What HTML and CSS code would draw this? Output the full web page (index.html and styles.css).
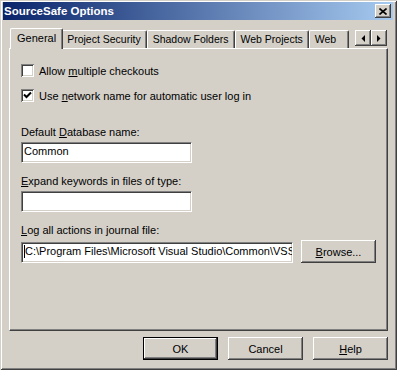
FILE: index.html
```html
<!DOCTYPE html>
<html lang="en">
<head>
    <meta charset="UTF-8">
    <title>SourceSafe Options</title>
    <link rel="stylesheet" href="styles.css">
</head>
<body>
    <div class="window">
        <div class="titlebar">
            <span class="title">SourceSafe Options</span>
            <span class="close-btn">
                <svg width="8" height="7" viewBox="0 0 8 7">
                    <path d="M0.5 0.5 L7.5 6.5 M7.5 0.5 L0.5 6.5" stroke="#000" stroke-width="1.6" fill="none"/>
                </svg>
            </span>
        </div>

        <div class="dialog">
            <div class="tab-header">
                <div class="tab-strip">
                    <div class="tab active">General</div>
                    <div class="tab">Project Security</div>
                    <div class="tab">Shadow Folders</div>
                    <div class="tab">Web Projects</div>
                    <div class="tab last">Web</div>
                </div>
                <div class="tab-arrows">
                    <span class="arrow-btn">
                        <svg width="4" height="7" viewBox="0 0 4 7"><polygon points="4,0 4,7 0.5,3.5" fill="#000"/></svg>
                    </span>
                    <span class="arrow-btn">
                        <svg width="4" height="7" viewBox="0 0 4 7"><polygon points="0,0 0,7 3.5,3.5" fill="#000"/></svg>
                    </span>
                </div>
            </div>

            <div class="tab-panel">
                <div class="check-row">
                    <span class="checkbox"></span>
                    <span class="check-label">Allow <u>m</u>ultiple checkouts</span>
                </div>
                <div class="check-row">
                    <span class="checkbox">
                        <svg width="9" height="9" viewBox="0 0 9 9"><path d="M1 3.5 L3.5 6 L8 1.5" stroke="#000" stroke-width="2" fill="none"/></svg>
                    </span>
                    <span class="check-label">Use <u>n</u>etwork name for automatic user log in</span>
                </div>

                <div class="field first">
                    <div class="field-label">Default <u>D</u>atabase name:</div>
                    <div class="textbox short">Common</div>
                </div>

                <div class="field">
                    <div class="field-label"><u>E</u>xpand keywords in files of type:</div>
                    <div class="textbox short"></div>
                </div>

                <div class="field">
                    <div class="field-label"><u>L</u>og all actions in journal file:</div>
                    <div class="field-row">
                        <div class="textbox long"><span class="caret"></span>C:\Program Files\Microsoft Visual Studio\Common\VSS\</div>
                        <button class="btn"><u>B</u>rowse...</button>
                    </div>
                </div>
            </div>

            <div class="footer">
                <button class="btn default">OK</button>
                <button class="btn">Cancel</button>
                <button class="btn"><u>H</u>elp</button>
            </div>
        </div>
    </div>
</body>
</html>
```

FILE: styles.css
```css
body {
    margin: 0;
    background: #d4d0c8;
    font-family: 'Liberation Sans', Arial, sans-serif;
    font-size: 11px;
    color: #000;
}
.window {
    width: 397px;
    height: 370px;
    box-sizing: border-box;
    padding: 2px 4px 0 3px;
    background: #d4d0c8;
    box-shadow: inset 1px 1px #d4d0c8, inset -1px -1px #404040, inset 2px 2px #fff, inset -2px -2px #808080;
}
.titlebar {
    height: 18px;
    display: flex;
    align-items: center;
    justify-content: space-between;
    padding: 0 2px 0 1px;
    background: linear-gradient(to right, #0a246a, #a6caf0);
}
.title {
    color: #fff;
    font-weight: bold;
    font-size: 11.5px;
}
.close-btn, .arrow-btn {
    display: flex;
    align-items: center;
    justify-content: center;
    box-sizing: border-box;
    background: #d4d0c8;
    box-shadow: inset -1px -1px #404040, inset 1px 1px #fff, inset -2px -2px #808080;
}
.close-btn {
    width: 16px;
    height: 14px;
}
.dialog {
    padding: 8px 0 0 6px;
}
.tab-header {
    display: flex;
    width: 379px;
    height: 21px;
    position: relative;
    z-index: 1;
}
.tab-strip {
    flex: 1;
    display: flex;
    align-items: flex-end;
    overflow: hidden;
    padding-left: 3px;
}
.tab {
    height: 18px;
    box-sizing: border-box;
    margin-bottom: 1px;
    padding: 0 5px;
    font-size: 10.5px;
    line-height: 16px;
    white-space: nowrap;
    background: #d4d0c8;
    border-top: 1px solid #fff;
    border-left: 1px solid #fff;
    border-right: 1px solid #404040;
    border-radius: 2px 2px 0 0;
    box-shadow: inset -1px 0 #808080;
}
.tab.last {
    padding-right: 12px;
}
.tab.active {
    height: 21px;
    margin: 0 -2px;
    padding: 0 6px;
    font-size: 11px;
    line-height: 18px;
    position: relative;
    z-index: 1;
}
.tab-arrows {
    display: flex;
    margin: 2px 1px 0 2px;
}
.arrow-btn {
    width: 16px;
    height: 16px;
}
.tab-panel {
    height: 283px;
    box-sizing: border-box;
    width: 379px;
    margin-top: -1px;
    padding: 15px 10px 0 11px;
    border-top: 1px solid #fff;
    border-left: 1px solid #fff;
    border-right: 1px solid #404040;
    border-bottom: 1px solid #404040;
    box-shadow: inset -1px -1px #808080;
}
.check-row {
    display: flex;
    align-items: flex-start;
    gap: 5px;
    height: 14px;
}
.check-row + .check-row {
    margin-top: 11px;
}
.checkbox {
    width: 13px;
    height: 13px;
    box-sizing: border-box;
    display: flex;
    align-items: center;
    justify-content: center;
    background: #fff;
    box-shadow: inset 1px 1px #808080, inset -1px -1px #fff, inset 2px 2px #404040, inset -2px -2px #d4d0c8;
}
.check-label {
    line-height: 13px;
    margin-top: 1px;
}
.field {
    margin-top: 12px;
}
.field.first {
    margin-top: 23px;
}
.field-label {
    line-height: 13px;
    margin-bottom: 3px;
}
.field-row {
    display: flex;
    align-items: flex-end;
    gap: 8px;
}
.textbox {
    height: 21px;
    box-sizing: border-box;
    padding: 0 2px;
    line-height: 17px;
    white-space: nowrap;
    overflow: hidden;
    background: #fff;
    border: 1px solid;
    border-color: #808080 #fff #fff #808080;
    box-shadow: inset 1px 1px #404040, inset -1px -1px #d4d0c8;
}
.textbox.short {
    width: 171px;
}
.textbox.long {
    width: 272px;
}
.caret {
    display: inline-block;
    width: 1px;
    height: 13px;
    background: #000;
    vertical-align: -3px;
}
.btn {
    width: 75px;
    height: 23px;
    box-sizing: border-box;
    padding: 0;
    border: none;
    background: #d4d0c8;
    font-family: inherit;
    font-size: 11px;
    color: #000;
    box-shadow: inset -1px -1px #404040, inset 1px 1px #fff, inset -2px -2px #808080;
}
.btn.default {
    border: 1px solid #000;
}
.footer {
    display: flex;
    justify-content: flex-end;
    gap: 10px;
    width: 379px;
    margin-top: 6px;
}
```
